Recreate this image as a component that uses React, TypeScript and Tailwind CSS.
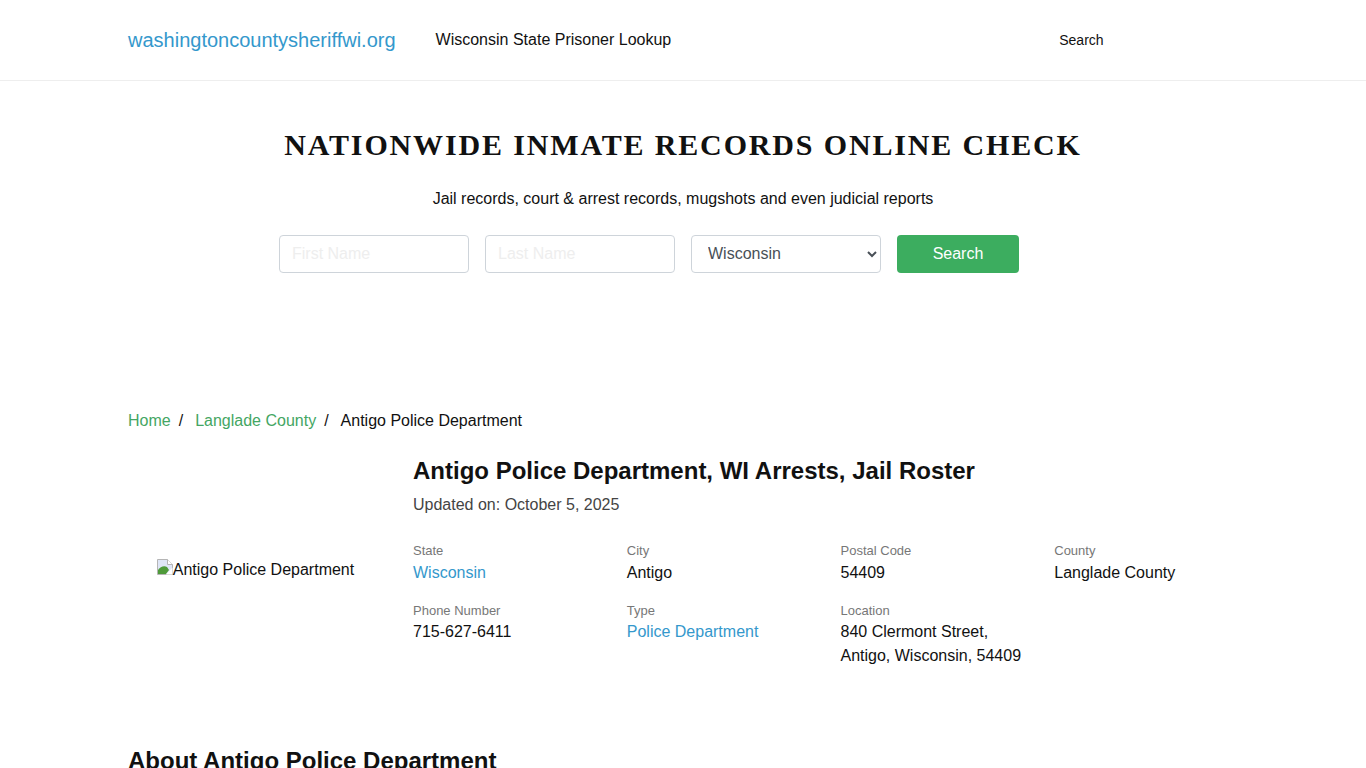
const fields = [
  [
    { label: 'State', value: 'Wisconsin', link: true },
    { label: 'City', value: 'Antigo' },
    { label: 'Postal Code', value: '54409' },
    { label: 'County', value: 'Langlade County' },
  ],
  [
    { label: 'Phone Number', value: '715-627-6411' },
    { label: 'Type', value: 'Police Department', link: true },
    { label: 'Location', value: '840 Clermont Street,\nAntigo, Wisconsin, 54409' },
  ],
];

const BrokenImage = () => (
  <svg width="16" height="16" viewBox="0 0 16 16" className="shrink-0 mt-[-6px]">
    <path d="M0.5 0.5h10l5 5v10h-15z" fill="#dfe6f7" stroke="#b5b5b5" />
    <path d="M10.5 0.5v5h5" fill="#fff" stroke="#b5b5b5" />
    <path d="M1 15v-4c2-3 6-5 9-3l2 3-3 4z" fill="#4f9a3a" />
    <path d="M9 15.5l6.5-7v7z" fill="#fff" />
  </svg>
);

export default function App() {
  return (
    <div className="h-screen overflow-hidden bg-white text-[#111] text-base leading-6 font-['Liberation_Sans',Arial,sans-serif]">
      {/* Header */}
      <header className="h-[81px] border-b border-[#eeeeee]">
        <div className="w-[1110px] mx-auto h-20 flex items-center">
          <a href="#" className="text-xl text-[#3498cc] mr-10">washingtoncountysheriffwi.org</a>
          <a href="#" className="text-base text-[#111]">Wisconsin State Prisoner Lookup</a>
          <a href="#" className="text-sm text-[#111] ml-[388px]">Search</a>
        </div>
      </header>

      {/* Search hero */}
      <section className="pt-[46px] text-center">
        <h2 className="font-['Liberation_Serif',serif] font-bold text-[30px] leading-9 tracking-[1.85px] text-[#111]">
          NATIONWIDE INMATE RECORDS ONLINE CHECK
        </h2>
        <p className="mt-6 text-base leading-6 text-[#111]">
          Jail records, court &amp; arrest records, mugshots and even judicial reports
        </p>
        <form className="mt-6 pr-[68px] flex justify-center gap-4">
          <input
            placeholder="First Name"
            className="w-[190px] h-[38px] px-3 border border-[#ced4da] rounded bg-white placeholder:text-[#eeeeee]"
          />
          <input
            placeholder="Last Name"
            className="w-[190px] h-[38px] px-3 border border-[#ced4da] rounded bg-white placeholder:text-[#eeeeee]"
          />
          <select
            defaultValue="Wisconsin"
            className="w-[190px] h-[38px] px-3 pb-[2px] border border-[#ced4da] rounded bg-white text-[#495057]"
          >
            <option>Wisconsin</option>
          </select>
          <button type="button" className="w-[122px] h-[38px] rounded bg-[#3cad5f] text-white">
            Search
          </button>
        </form>
      </section>

      <main className="w-[1110px] mx-auto">
        {/* Breadcrumb */}
        <nav className="mt-[136px] flex text-[#111]">
          <a href="#" className="text-[#44a663]">Home</a>
          <span className="ml-2 mr-3">/</span>
          <a href="#" className="text-[#44a663]">Langlade County</a>
          <span className="ml-2 mr-3">/</span>
          <span>Antigo Police Department</span>
        </nav>

        <div className="mt-[23px] flex">
          <div className="w-[285px] shrink-0 flex items-center justify-center pr-[30px]">
            <div className="flex items-center">
              <BrokenImage />
              <span>Antigo Police Department</span>
            </div>
          </div>

          <div className="flex-1">
            <h1 className="text-2xl leading-[29px] font-bold text-[#111]">
              Antigo Police Department, WI Arrests, Jail Roster
            </h1>
            <p className="mt-2 text-[#444444]">Updated on: October 5, 2025</p>

            <div className="mt-6 w-[855px]">
              {fields.map((row, i) => (
                <div key={i} className="grid grid-cols-4 mb-4">
                  {row.map((f) => (
                    <div key={f.label}>
                      <div className="text-[13px] leading-[19.5px] text-[#777777]">{f.label}</div>
                      <div className={`whitespace-pre-line ${f.link ? 'text-[#3498cc]' : 'text-[#111]'}`}>
                        {f.value}
                      </div>
                    </div>
                  ))}
                </div>
              ))}
            </div>
          </div>
        </div>

        <h2 className="mt-[62px] text-2xl leading-[29px] font-bold text-[#111]">About Antigo Police Department</h2>
      </main>
    </div>
  );
}
